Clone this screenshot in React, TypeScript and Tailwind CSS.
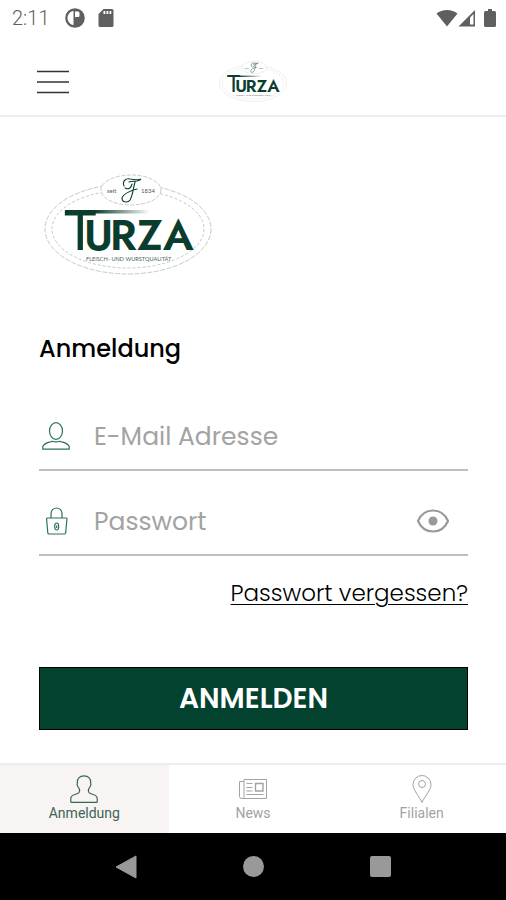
import { useState } from "react";

const tabs = [
  { label: "Anmeldung", icon: PersonIcon },
  { label: "News", icon: NewsIcon },
  { label: "Filialen", icon: PinIcon },
];

function TurzaLogo({ id, className }: { id: string; className: string }) {
  return (
    <svg viewBox="0 0 168 101" className={className} role="img" aria-label="Turza">
      <defs>
        <linearGradient id={id} x1="0" x2="1" y1="0" y2="0">
          <stop offset="0.35" stopColor="#0b3d2e" />
          <stop offset="1" stopColor="#0b3d2e" stopOpacity="0" />
        </linearGradient>
      </defs>
      <g fill="none" stroke="#b4bdb9" strokeWidth="0.8">
        <ellipse cx="84" cy="55" rx="83" ry="45" strokeDasharray="5 1.5" />
        <ellipse cx="84" cy="55" rx="76" ry="39" strokeDasharray="3 2" />
        <ellipse cx="87" cy="16" rx="30" ry="15" fill="#fff" strokeDasharray="4 1.5" />
      </g>
      {/* script initial */}
      <path
        d="M80 12c-2-5 2-8 6-7 4 0 7 2 11 0-3 4-8 1-12 3M91 8c-2 7-2 13-5 18-2 3-8 3-8-2 1-4 10-8 15-9M81 14c4 2 6 0 7-4"
        fill="none"
        stroke="#0b3d2e"
        strokeWidth="1.1"
        strokeLinecap="round"
      />
      <g fill="#4c5f57" fontFamily="Lato, sans-serif">
        <text x="63" y="19" fontSize="6">seit</text>
        <text x="97" y="19" fontSize="6">1834</text>
        <text x="42" y="87" fontSize="5.600">FLEISCH- UND WURSTQUALITÄT</text>
      </g>
      <rect x="21" y="36" width="85" height="3.500" fill={`url(#${id})`} />
      <text y="76" fontSize="43" fontWeight="600" fill="#0b3d2e" fontFamily="Jost, Poppins, sans-serif">
        <tspan x="20" fontSize="55" fontWeight="400" fontFamily="Lato, sans-serif">T</tspan>
        <tspan x="40">U</tspan>
        <tspan x="66">R</tspan>
        <tspan x="93">Z</tspan>
        <tspan x="119">A</tspan>
      </text>
    </svg>
  );
}

function PersonIcon() {
  return (
    <svg viewBox="0 0 28 28" className="size-7" fill="none" stroke="currentColor" strokeWidth="1.2" strokeLinejoin="round">
      <path d="M14 .8c4.400 0 6.800 2.600 6.600 6.600 0 1 .6 1.600.2 2.800-.5 1.800-1.600 2.400-2.200 3.800-.6 2.400 0 3.600 1.400 4.300 3.400 1.500 7.200 1.500 7.200 5v3.400c0 .4-.3.7-.7.7h-25c-.4 0-.7-.3-.7-.7v-3.400c0-3.500 3.800-3.500 7.200-5 1.400-.7 2-1.900 1.400-4.300-.6-1.400-1.700-2-2.200-3.800-.4-1.200.2-1.800.2-2.800C7.200 3.400 9.600.8 14 .8z" />
    </svg>
  );
}

function NewsIcon() {
  return (
    <svg viewBox="0 0 28 28" className="size-7" fill="none" stroke="currentColor" strokeWidth="1">
      <path d="M5 4.500h22.500v19H2.500a2 2 0 0 1-2-2V6.500H5M5 4.500v17a2 2 0 0 1-2.500 2M7.500 8.500h6M7.500 12.500h6M7.500 16h6M7.500 19.500h17" />
      <path d="M16.500 8.500h7.500v7.500h-7.500z" strokeWidth="1.4" />
    </svg>
  );
}

function PinIcon() {
  return (
    <svg viewBox="0 0 28 28" className="size-7" fill="none" stroke="currentColor" strokeWidth="1">
      <path d="M14 27.500C11 21 5 15 5 9.500a9 9 0 0 1 18 0C23 15 17 21 14 27.500z" />
      <circle cx="14" cy="9" r="3.500" />
    </svg>
  );
}

function UserIcon() {
  return (
    <svg viewBox="0 0 28 28" className="size-7" fill="none" stroke="#2f7058" strokeWidth="1.2" strokeLinejoin="round" role="img" aria-label="E-Mail Adresse">
      <ellipse cx="14" cy="9" rx="6.500" ry="8.300" />
      <path d="M.8 27.200v-2.700c2-4.500 7-4 9.200-5.300 2.600.8 5.400.8 8 0 2.200 1.300 7.200.8 9.200 5.300v2.700z" />
    </svg>
  );
}

function LockIcon() {
  return (
    <svg viewBox="0 0 28 28" className="size-7" fill="none" stroke="#2f7058" strokeWidth="1.2" strokeLinejoin="round" role="img" aria-label="Passwort">
      <path d="M5.500 11h18.500c.8 0 1 .5.9 1.200l-1.200 13.600c0 .7-.4 1.200-1.200 1.200H7c-.8 0-1.200-.5-1.200-1.200L4.600 12.200c-.1-.7.1-1.200.9-1.200z" />
      <path d="M9 11V6.500a5.500 5.500 0 0 1 11 0V11" />
      <ellipse cx="14.700" cy="19.500" rx="2" ry="3.500" />
      <path d="M14.700 18.500v2.500" />
    </svg>
  );
}

function StatusBar() {
  return (
    <div className="flex h-9 items-center justify-between pl-3 pr-2 text-[#5f5f5f]">
      <div className="flex items-center">
        <span className="w-[53px] font-[Roboto,sans-serif] text-xl font-light">2:11</span>
        <svg viewBox="0 0 20 20" className="size-5">
          <circle cx="10" cy="10" r="9.800" fill="currentColor" />
          <path d="M8.500 3v14C4.800 16.400 2.500 13.500 2.500 10S4.800 3.600 8.500 3z" fill="#fff" />
          <path d="M10 3.500h3a1.500 1.500 0 0 1 1.500 1.500v2.500A1.500 1.500 0 0 1 13 9h-3z" fill="#fff" />
        </svg>
        <svg viewBox="0 0 16 20" className="ml-[13px] h-5 w-4" fill="currentColor">
          <path d="M5.500 1H14a1.500 1.500 0 0 1 1.500 1.500v15A1.500 1.500 0 0 1 14 19H2a1.500 1.500 0 0 1-1.500-1.500V6z" />
          <path d="M5.500 3h1.800v3H5.500zM8.500 3h1.800v3H8.500zM11.500 3h1.800v3h-1.800z" fill="#fff" />
        </svg>
      </div>
      <div className="flex items-center">
        <svg viewBox="0 0 22 18" className="h-[18px] w-[22px]" fill="currentColor">
          <path d="M11 17.500L.5 4.500C6-.2 16-.2 21.500 4.500z" />
        </svg>
        <svg viewBox="0 0 18 18" className="size-[18px]">
          <path d="M17 1v16.500H.5z" fill="currentColor" />
          <path d="M12 8.500L15.500 5v10.500H12z" fill="#fff" />
        </svg>
        <svg viewBox="0 0 12 20" className="ml-2 mr-[2px] h-5 w-3" fill="currentColor">
          <path d="M4 1h4v2h2.500A1.500 1.500 0 0 1 12 4.500v13a1.500 1.500 0 0 1-1.500 1.500h-9A1.500 1.500 0 0 1 0 17.500v-13A1.500 1.500 0 0 1 1.500 3H4z" />
        </svg>
      </div>
    </div>
  );
}

export default function App() {
  const [active, setActive] = useState("Anmeldung");
  const [showPassword, setShowPassword] = useState(false);

  return (
    <div className="flex min-h-screen flex-col bg-white font-[Poppins,Inter,sans-serif] text-black">
      <StatusBar />

      <header className="grid h-[81px] grid-cols-3 items-center border-b-2 border-[#ededed] px-9 pt-3">
        <button type="button" aria-label="Menü" className="justify-self-start">
          <svg viewBox="0 0 34 24" className="h-6 w-[34px]" stroke="#333" strokeWidth="1.5">
            <path d="M1 1.500h32M1 12h32M1 22.500h32" />
          </svg>
        </button>
        <TurzaLogo id="bar-small" className="w-[68px] justify-self-center" />
      </header>

      <main className="flex-1 pt-[57px] pr-[38px] pl-[39px]">
        <TurzaLogo id="bar-large" className="ml-[5px] h-[101px] w-[168px]" />

        <h1 className="mt-[58px] text-2xl leading-8 font-medium">Anmeldung</h1>

        <form className="mt-[38px]" onSubmit={(e) => e.preventDefault()}>
          <div className="flex h-[68px] items-center gap-6 border-b-2 border-[#bfbfbf] pl-[3px]">
            <label htmlFor="email">
              <UserIcon />
            </label>
            <input
              id="email"
              type="email"
              placeholder="E-Mail Adresse"
              className="min-w-0 flex-1 pt-px text-[25px] leading-8 outline-none placeholder:text-[#a3a3a3]"
            />
          </div>

          <div className="mt-[17px] flex h-[68px] items-center gap-6 border-b-2 border-[#bfbfbf] pr-[18px] pl-[3px]">
            <label htmlFor="password">
              <LockIcon />
            </label>
            <input
              id="password"
              type={showPassword ? "text" : "password"}
              placeholder="Passwort"
              className="min-w-0 flex-1 pt-px text-[25px] leading-8 outline-none placeholder:text-[#a3a3a3]"
            />
            <button type="button" aria-label="Passwort anzeigen" onClick={() => setShowPassword(!showPassword)}>
              <svg viewBox="0 0 34 26" className="h-[26px] w-[34px]" fill="none" stroke="#999" strokeWidth="2.2">
                <path d="M2 13C5 6 10.500 2.500 17 2.500S29 6 32 13c-3 7-8.500 10.500-15 10.500S5 20 2 13z" strokeLinejoin="round" />
                <circle cx="17" cy="13" r="4.500" fill="#999" stroke="none" />
              </svg>
            </button>
          </div>

          <div className="mt-[21px] text-right">
            <a href="#" className="text-[23px] leading-8 font-light underline decoration-1 underline-offset-3">
              Passwort vergessen?
            </a>
          </div>

          <button type="submit" className="mt-[58px] h-[63px] w-full border border-black bg-[#02422f] text-[28px] font-semibold text-white">
            ANMELDEN
          </button>
        </form>
      </main>

      <nav className="grid h-[70px] grid-cols-3 border-t-2 border-[#ededed] font-[Roboto,sans-serif] text-sm">
        {tabs.map(({ label, icon: Icon }) => (
          <button
            key={label}
            type="button"
            onClick={() => setActive(label)}
            className={`flex flex-col items-center pt-[10px] leading-5 ${
              active === label ? "bg-[#f7f4f3] text-[#3c6455]" : "text-[#a3a3a3]"
            }`}
          >
            <Icon />
            {label}
          </button>
        ))}
      </nav>

      <div className="flex h-[67px] items-center justify-around bg-black px-[62px]">
        <button type="button" aria-label="Zurück">
          <svg viewBox="0 0 22 24" className="h-6 w-[22px]" fill="#999">
            <path d="M21 1v22L1 12z" stroke="#999" strokeLinejoin="round" />
          </svg>
        </button>
        <button type="button" aria-label="Startseite" className="size-[21px] rounded-full bg-[#999]" />
        <button type="button" aria-label="Übersicht" className="size-[21px] rounded-xs bg-[#999]" />
      </div>
    </div>
  );
}
